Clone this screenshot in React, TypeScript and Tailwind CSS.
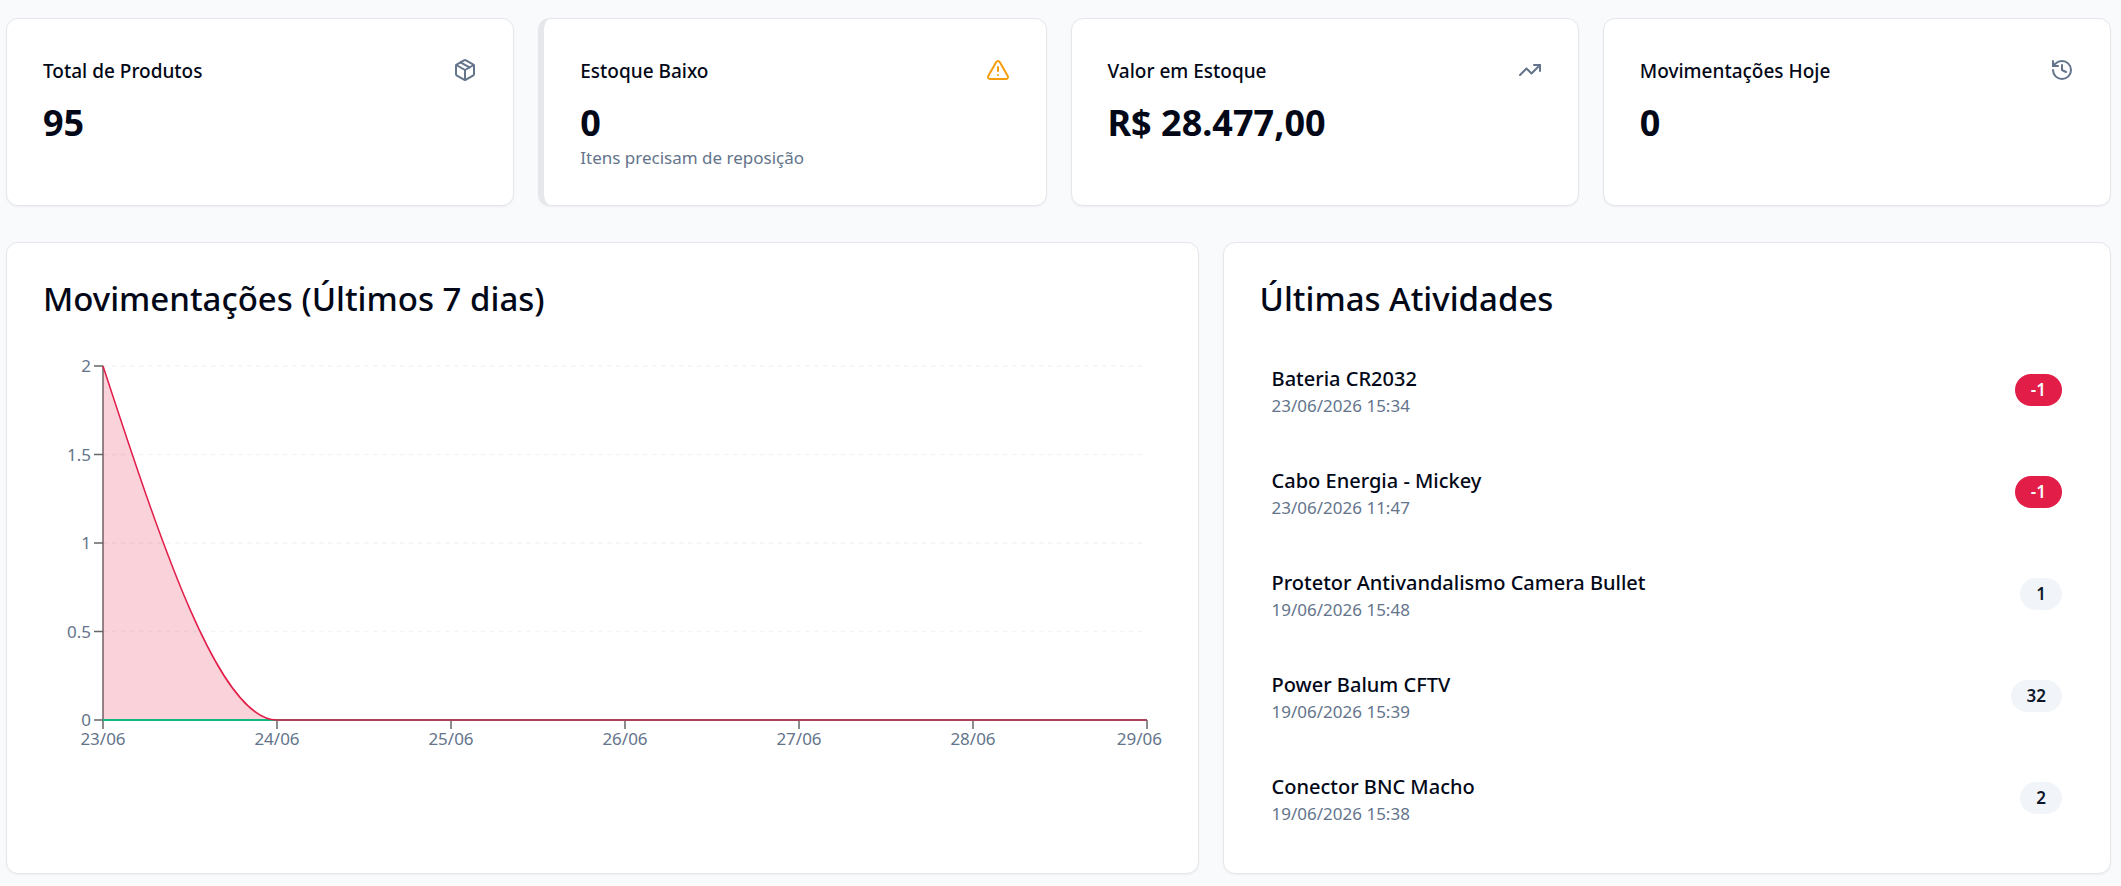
import { useLayoutEffect, useRef, useState } from "react";
import type { ReactNode } from "react";
import { History, Package, TrendingUp, TriangleAlert } from "lucide-react";

const stats = [
  {
    title: "Total de Produtos",
    value: "95",
    icon: <Package className="size-6 text-[#64748b]" />,
  },
  {
    title: "Estoque Baixo",
    value: "0",
    note: "Itens precisam de reposição",
    icon: <TriangleAlert className="size-6 text-[#f59e0b]" />,
    accent: true,
  },
  {
    title: "Valor em Estoque",
    value: "R$ 28.477,00",
    icon: <TrendingUp className="size-6 text-[#64748b]" />,
  },
  {
    title: "Movimentações Hoje",
    value: "0",
    icon: <History className="size-6 text-[#64748b]" />,
  },
];

const activities = [
  { name: "Bateria CR2032", date: "23/06/2026 15:34", amount: -1 },
  { name: "Cabo Energia - Mickey", date: "23/06/2026 11:47", amount: -1 },
  { name: "Protetor Antivandalismo Camera Bullet", date: "19/06/2026 15:48", amount: 1 },
  { name: "Power Balum CFTV", date: "19/06/2026 15:39", amount: 32 },
  { name: "Conector BNC Macho", date: "19/06/2026 15:38", amount: 2 },
];

const days = ["23/06", "24/06", "25/06", "26/06", "27/06", "28/06", "29/06"];
const levels = [2, 1.5, 1, 0.5, 0];

function StatCard({
  title,
  value,
  note,
  icon,
  accent,
}: {
  title: string;
  value: string;
  note?: string;
  icon: ReactNode;
  accent?: boolean;
}) {
  return (
    <div
      className={`rounded-xl border border-gray-200 bg-white p-9 shadow-xs ${
        accent ? "border-l-6" : ""
      }`}
    >
      <div className="flex items-start justify-between pb-3">
        <h3 className="text-[19px] leading-8 font-medium">{title}</h3>
        <div className="py-[3px]">{icon}</div>
      </div>
      <div className="text-4xl leading-[48px] font-bold">{value}</div>
      {note && <p className="text-[17px] leading-[22px] text-[#64748b]">{note}</p>}
    </div>
  );
}

function MovementsChart() {
  const ref = useRef<HTMLDivElement>(null);
  const [width, setWidth] = useState(1119);

  useLayoutEffect(() => {
    const el = ref.current;
    if (!el) return;
    const update = () => setWidth(Math.round(el.clientWidth));
    update();
    const observer = new ResizeObserver(update);
    observer.observe(el);
    return () => observer.disconnect();
  }, []);

  const left = 60;
  const right = width - 15;
  const top = 15;
  const bottom = 369;
  const step = (right - left) / (days.length - 1);
  const y = (level: number) => bottom - (level / 2) * (bottom - top);

  // Monotone curve: falls from 2 to 0 on the first day and stays flat
  const curve = `M${left},${top}C${left + step / 3},${(top + bottom) / 2},${
    left + (step * 2) / 3
  },${bottom},${left + step},${bottom}L${right},${bottom}`;

  return (
    <div ref={ref} className="w-full">
      <svg
        width={width}
        height={414}
        className="block text-[17px]"
        role="img"
        aria-label="Movimentações"
      >
        {/* Grid */}
        <g stroke="#f1f5f9" strokeWidth={1.5} strokeDasharray="4.5 4.5">
          {levels.map((level) => (
            <line key={level} x1={left} x2={right} y1={y(level)} y2={y(level)} />
          ))}
        </g>

        {/* Axes */}
        <g stroke="#666" strokeWidth={1.5}>
          <line x1={left} x2={left} y1={top} y2={bottom} />
          <line x1={left} x2={right} y1={bottom} y2={bottom} />
          {levels.map((level) => (
            <line key={level} x1={left - 9} x2={left} y1={y(level)} y2={y(level)} />
          ))}
          {days.map((day, i) => (
            <line
              key={day}
              x1={left + i * step}
              x2={left + i * step}
              y1={bottom}
              y2={bottom + 9}
            />
          ))}
        </g>
        <g fill="#64748b">
          {levels.map((level) => (
            <text key={level} x={left - 12} y={y(level) + 6} textAnchor="end">
              {level}
            </text>
          ))}
          {days.map((day, i) => {
            const last = i === days.length - 1;
            return (
              <text
                key={day}
                x={last ? width : left + i * step}
                y={bottom + 25}
                textAnchor={last ? "end" : "middle"}
              >
                {day}
              </text>
            );
          })}
        </g>

        {/* Series */}
        <path d={`${curve}L${left},${bottom}Z`} fill="#e11d48" fillOpacity={0.2} />
        <line x1={left} x2={right} y1={bottom} y2={bottom} stroke="#10b981" strokeWidth={2} />
        <path d={curve} fill="none" stroke="#e11d48" strokeWidth={1.5} />
      </svg>
    </div>
  );
}

export default function App() {
  return (
    <main className="min-h-screen bg-[#f9fafc] pt-[18px] pr-[10px] pb-3 pl-[6px] font-['Noto_Sans','Open_Sans',sans-serif] text-[#020817]">
      {/* Stats */}
      <section className="grid gap-6 md:grid-cols-2 lg:grid-cols-4">
        {stats.map((stat) => (
          <StatCard key={stat.title} {...stat} />
        ))}
      </section>

      <section className="mt-9 grid gap-6 lg:grid-cols-7">
        {/* Chart */}
        <div className="min-w-0 rounded-xl border border-gray-200 bg-white p-9 shadow-xs lg:col-span-4">
          <h2 className="pb-8 text-[33px] leading-10 font-medium">
            Movimentações (Últimos 7 dias)
          </h2>
          <MovementsChart />
        </div>

        {/* Recent activity */}
        <div className="rounded-xl border border-gray-200 bg-white p-9 shadow-xs lg:col-span-3">
          <h2 className="pb-8 text-[33px] leading-10 font-medium">Últimas Atividades</h2>
          <ul className="flex flex-col gap-6">
            {activities.map((item) => (
              <li key={item.name} className="flex items-center justify-between p-3">
                <div>
                  <p className="text-xl leading-8 font-medium">{item.name}</p>
                  <p className="text-[17px] leading-[22px] text-[#64748b]">{item.date}</p>
                </div>
                <span
                  className={`rounded-full px-4 py-1 text-[17px] leading-6 font-semibold ${
                    item.amount < 0
                      ? "bg-[#e11d48] text-[#f8fafc]"
                      : "bg-[#f1f5f9] text-[#0f172a]"
                  }`}
                >
                  {item.amount}
                </span>
              </li>
            ))}
          </ul>
        </div>
      </section>
    </main>
  );
}
